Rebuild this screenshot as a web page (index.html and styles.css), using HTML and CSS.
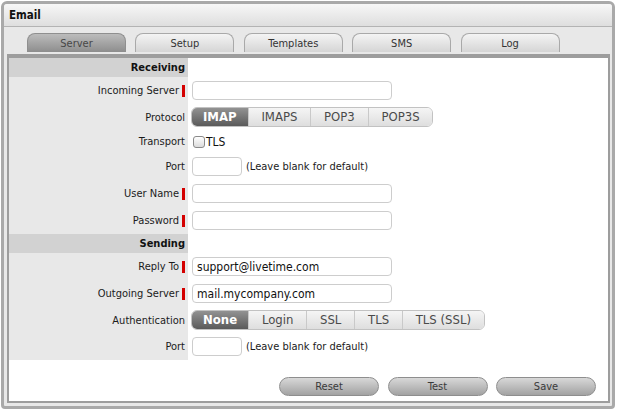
FILE: index.html
```html
<!DOCTYPE html>
<html>
<head>
<meta charset="utf-8">
<link rel="stylesheet" href="styles.css">
</head>
<body>
<div class="window">
  <div class="titlebar">Email</div>
  <div class="tabs">
    <div class="tab active">Server</div>
    <div class="tab">Setup</div>
    <div class="tab">Templates</div>
    <div class="tab">SMS</div>
    <div class="tab">Log</div>
  </div>
  <div class="panel">
    <div class="form">
      <div class="row section"><div class="label">Receiving</div><div></div></div>
      <div class="row"><div class="label">Incoming Server<span class="req"></span></div><div class="field"><input class="input" type="text" value=""></div></div>
      <div class="row seg-row"><div class="label">Protocol</div><div class="field">
        <div class="segs"><span class="seg on">IMAP</span><span class="seg">IMAPS</span><span class="seg">POP3</span><span class="seg">POP3S</span></div>
      </div></div>
      <div class="row check-row"><div class="label">Transport</div><div class="field"><span class="check"></span><span class="check-text">TLS</span></div></div>
      <div class="row"><div class="label">Port</div><div class="field"><input class="input short" type="text" value=""><span class="hint">(Leave blank for default)</span></div></div>
      <div class="row"><div class="label">User Name<span class="req"></span></div><div class="field"><input class="input" type="text" value=""></div></div>
      <div class="row"><div class="label">Password<span class="req"></span></div><div class="field"><input class="input" type="text" value=""></div></div>
      <div class="row section"><div class="label">Sending</div><div></div></div>
      <div class="row"><div class="label">Reply To<span class="req"></span></div><div class="field"><input class="input" type="text" value="support@livetime.com"></div></div>
      <div class="row"><div class="label">Outgoing Server<span class="req"></span></div><div class="field"><input class="input" type="text" value="mail.mycompany.com"></div></div>
      <div class="row seg-row"><div class="label">Authentication</div><div class="field">
        <div class="segs"><span class="seg on">None</span><span class="seg">Login</span><span class="seg">SSL</span><span class="seg">TLS</span><span class="seg">TLS (SSL)</span></div>
      </div></div>
      <div class="row"><div class="label">Port</div><div class="field"><input class="input short" type="text" value=""><span class="hint">(Leave blank for default)</span></div></div>
    </div>
    <div class="actions">
      <button class="btn">Reset</button>
      <button class="btn">Test</button>
      <button class="btn">Save</button>
    </div>
  </div>
</div>
</body>
</html>
```
FILE: styles.css
```css
html, body {
  margin: 0;
  padding: 0;
  background: #ffffff;
}
body {
  font-family: "DejaVu Sans Condensed", "DejaVu Sans", sans-serif;
  font-stretch: condensed;
  color: #1b1b1b;
  padding: 1px 3px 0 1px;
}
.window {
  height: 402px;
  border: 3px solid #a9a9a9;
  border-radius: 6px 6px 4px 4px;
  background: #e8e8e8;
  display: flex;
  flex-direction: column;
}
.titlebar {
  height: 22px;
  line-height: 22px;
  border-bottom: 1px solid #b3b3b3;
  border-radius: 3px 3px 0 0;
  background: linear-gradient(#f7f7f7, #dedede);
  padding-left: 5px;
  font-weight: bold;
  font-size: 11.5px;
  color: #111;
}
.tabs {
  display: flex;
  gap: 9.4px;
  padding: 6px 0 0 23px;
}
.tab {
  width: 97px;
  height: 18px;
  line-height: 19px;
  border: 1px solid #a9a9a9;
  border-bottom: none;
  border-radius: 8px 8px 0 0;
  background: linear-gradient(#f4f4f4, #d5d5d5);
  text-align: center;
  font-size: 11px;
  color: #333;
}
.tab.active {
  background: linear-gradient(#bcbcbc, #8d8d8d);
  border-color: #8f8f8f;
  color: #474747;
}
.panel {
  flex: 1;
  margin: 2px 2px 3px 3px;
  border: 2px solid #9d9d9d;
  border-top-width: 4px;
  background: #ffffff;
  display: flex;
  flex-direction: column;
}
.row {
  display: grid;
  grid-template-columns: 179px 1fr;
  height: 27px;
}
.row.seg-row { height: 26px; }
.row.check-row { height: 23px; }
.row.section { height: 19px; }
.label {
  background: #e8e8e8;
  display: flex;
  align-items: center;
  justify-content: flex-end;
  padding-right: 3px;
  font-size: 11px;
  color: #1b1b1b;
  white-space: nowrap;
}
.section .label {
  background: #d2d2d2;
  font-weight: bold;
  color: #111;
}
.req {
  display: inline-block;
  width: 3px;
  height: 12px;
  margin-left: 3px;
  background: #d40000;
}
.field {
  display: flex;
  align-items: center;
  padding-left: 3px;
}
.input {
  box-sizing: border-box;
  width: 200px;
  height: 19px;
  margin: 0 0 0 1px;
  border: 1px solid #cdcdcd;
  border-radius: 4px;
  padding: 0 4px;
  background: #fff;
  font-family: inherit;
  font-stretch: condensed;
  font-size: 12px;
  color: #111;
  outline: none;
}
.input.short { width: 50px; }
.hint {
  margin-left: 4px;
  font-size: 11px;
  color: #1b1b1b;
}
.segs {
  display: flex;
  height: 20px;
  box-sizing: border-box;
  border: 1px solid #c2c2c2;
  border-radius: 6px;
  overflow: hidden;
}
.seg {
  padding: 0 12.8px;
  line-height: 18px;
  font-size: 13px;
  color: #4a4a4a;
  background: linear-gradient(#f5f5f5, #dedede);
  border-left: 1px solid #c9c9c9;
}
.seg.on {
  border-left: none;
  padding: 0 11px;
  font-weight: bold;
  color: #fff;
  background: linear-gradient(#929292, #5a5a5a);
}
.check {
  box-sizing: border-box;
  width: 12px;
  height: 12px;
  margin-left: 2px;
  border: 1px solid #8a8a8a;
  border-radius: 3px;
  background: linear-gradient(#ffffff, #dcdcdc);
}
.check-text {
  margin-left: 1px;
  font-size: 12px;
  color: #111;
}
.actions {
  display: flex;
  justify-content: flex-end;
  gap: 8.5px;
  padding: 17px 12px 0 0;
}
.btn {
  box-sizing: border-box;
  width: 100px;
  height: 19px;
  padding: 0;
  border: 1px solid #8e8e8e;
  border-radius: 10px;
  background: linear-gradient(#d8d8d8, #a2a2a2);
  font-family: inherit;
  font-stretch: condensed;
  font-size: 11px;
  color: #3a3a3a;
}
```
